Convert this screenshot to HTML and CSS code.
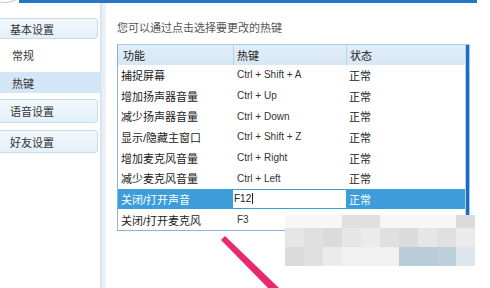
FILE: index.html
```html
<!DOCTYPE html>
<html lang="zh-CN">
<head>
<meta charset="utf-8">
<link rel="stylesheet" href="styles.css">
</head>
<body>
<div class="window">
  <div class="topbar"></div>
  <div class="layout">
    <aside class="sidebar">
      <div class="group-btn first">基本设置</div>
      <div class="sub-item normal">常规</div>
      <div class="sub-item active">热键</div>
      <div class="group-btn voice">语音设置</div>
      <div class="group-btn friend">好友设置</div>
    </aside>
    <div class="divider"></div>
    <main class="content">
      <p class="desc">您可以通过点击选择要更改的热键</p>
      <div class="table">
        <div class="grid">
          <div class="th">功能</div>
          <div class="th sep">热键</div>
          <div class="th sep">状态</div>

          <div class="td">捕捉屏幕</div><div class="td key">Ctrl + Shift + A</div><div class="td">正常</div>
          <div class="td">增加扬声器音量</div><div class="td key">Ctrl + Up</div><div class="td">正常</div>
          <div class="td">减少扬声器音量</div><div class="td key">Ctrl + Down</div><div class="td">正常</div>
          <div class="td">显示/隐藏主窗口</div><div class="td key">Ctrl + Shift + Z</div><div class="td">正常</div>
          <div class="td">增加麦克风音量</div><div class="td key">Ctrl + Right</div><div class="td">正常</div>
          <div class="td">减少麦克风音量</div><div class="td key">Ctrl + Left</div><div class="td">正常</div>
          <div class="td sel">关闭/打开声音</div><div class="td sel editing"><span class="input">F12<span class="caret"></span></span></div><div class="td sel">正常</div>
          <div class="td">关闭/打开麦克风</div><div class="td key">F3</div><div class="td">正常</div>
        </div>
        <div class="scrollbar"></div>
      </div>
    </main>
  </div>

  <div class="avatar"></div>

  <div class="mosaic">
    <div class="m-row r1">
      <i class="b0"></i><i class="b0"></i><i class="b0"></i><i class="b2"></i><i class="b2"></i><i class="b0"></i><i class="b0"></i><i class="b0"></i><i class="b0"></i><i class="b3"></i>
    </div>
    <div class="m-row">
      <i class="b1"></i><i class="b2"></i><i class="b3"></i><i class="b1"></i><i class="b4"></i><i class="b2"></i><i class="b3"></i><i class="b1"></i><i class="b2"></i><i class="b4"></i>
    </div>
    <div class="m-row">
      <i class="b3"></i><i class="b2"></i><i class="b4"></i><i class="b5"></i><i class="b5"></i><i class="b5"></i><i class="bb"></i><i class="bb"></i><i class="bb2"></i><i class="bb3"></i>
    </div>
  </div>

  <svg class="arrow" width="490" height="288" viewBox="0 0 490 288">
    <polygon points="221,240 225,236 279,288 268,288" fill="#e8296f"/>
  </svg>
</div>
</body>
</html>
```

FILE: styles.css
```css
* { box-sizing: border-box; margin: 0; padding: 0; }

html, body {
  width: 490px;
  height: 288px;
  overflow: hidden;
  background: #ffffff;
}

body {
  font-family: "Liberation Sans", "Noto Sans CJK SC", sans-serif;
  font-size: 11px;
  color: #222;
}

.window {
  position: relative;
  width: 490px;
  height: 288px;
  overflow: hidden;
  background: #fff;
}

.topbar {
  height: 3px;
  margin-left: 19px;
  width: 458px;
  background: #2676c6;
}

.layout {
  display: flex;
  height: 285px;
}

/* Sidebar */
.sidebar {
  width: 100px;
  padding-top: 15px;
  display: flex;
  flex-direction: column;
  background: #fff;
}

.group-btn {
  margin-left: -4px;
  width: 102px;
  border: 1px solid #c6dcec;
  border-radius: 3px;
  background: linear-gradient(#f3f9fd, #e3eff9);
  color: #333;
  padding-left: 13px;
  display: flex;
  align-items: center;
}

.group-btn.first { height: 21px; }
.group-btn.voice { height: 24px; margin-top: 6px; }
.group-btn.friend { height: 23px; margin-top: 7px; }

.sub-item {
  padding-left: 12px;
  display: flex;
  align-items: center;
  color: #333;
}

.sub-item.normal { height: 22px; margin-top: 5px; }
.sub-item.active {
  height: 21px;
  margin-top: 6px;
  background: #d3e6f7;
}

.divider {
  width: 6px;
  background: linear-gradient(to right, #d4dce4, #e6eef7 40%, #edf4fb);
}

/* Content */
.content {
  flex: 1;
  padding-left: 11px;
  padding-top: 17px;
}

.desc {
  height: 16px;
  line-height: 16px;
  color: #555;
}

.table {
  margin-top: 8px;
  width: 353px;
  display: flex;
  border-top: 1px solid #a9cbe5;
  border-left: 1px solid #8fb3d2;
  border-bottom: 1px solid #8fb3d2;
}

.grid {
  flex: 1;
  display: grid;
  grid-template-columns: 115px 113px 1fr;
  grid-template-rows: 19.5px repeat(8, 20.7px);
}

.th {
  background: linear-gradient(#e2eef9, #d6e7f5);
  display: flex;
  align-items: center;
  padding-left: 5px;
  color: #222;
}

.th.sep {
  border-left: 1px solid #b9d2e6;
  padding-left: 3px;
}

.td {
  display: flex;
  align-items: center;
  padding-left: 3px;
  color: #222;
}

.td.key {
  padding-left: 4px;
  color: #333;
  font-size: 10px;
}

.td.sel {
  background: #3d9ddb;
  color: #fff;
}

.td.editing {
  padding: 1px 0 1px 0;
  align-items: stretch;
  font-size: 10px;
}

.input {
  flex: 1;
  background: #fff;
  color: #222;
  display: flex;
  align-items: center;
  padding-left: 1px;
}

.caret {
  display: inline-block;
  width: 1px;
  height: 11px;
  background: #222;
  margin-left: 1px;
}

.scrollbar {
  width: 5px;
  border-left: 1px solid #b3d4ec;
  border-right: 1px solid #a6c8e4;
  background: #1d6cc3;
}

/* Overlays */
.avatar {
  position: absolute;
  left: -18px;
  top: -43px;
  width: 46px;
  height: 46px;
  border-radius: 50%;
  border: 1.5px solid #c4c4c4;
  background: #fff;
}

.mosaic {
  position: absolute;
  left: 285px;
  top: 215px;
  width: 190px;
  display: flex;
  flex-direction: column;
}

.m-row {
  display: flex;
  height: 19px;
}

.m-row.r1 { height: 13px; }

.m-row i {
  display: block;
  width: 19px;
  height: 100%;
}

.b0 { background: #f7f7f7; }
.b1 { background: #e6e6e6; }
.b2 { background: #e0e0e0; }
.b3 { background: #dbdbdb; }
.b4 { background: #ebebeb; }
.b5 { background: #f1f1f1; }
.bb { background: #b9cdd8; }
.bb2 { background: #bccfda; }
.bb3 { background: #dde6ec; }

.arrow {
  position: absolute;
  left: 0;
  top: 0;
}
```
